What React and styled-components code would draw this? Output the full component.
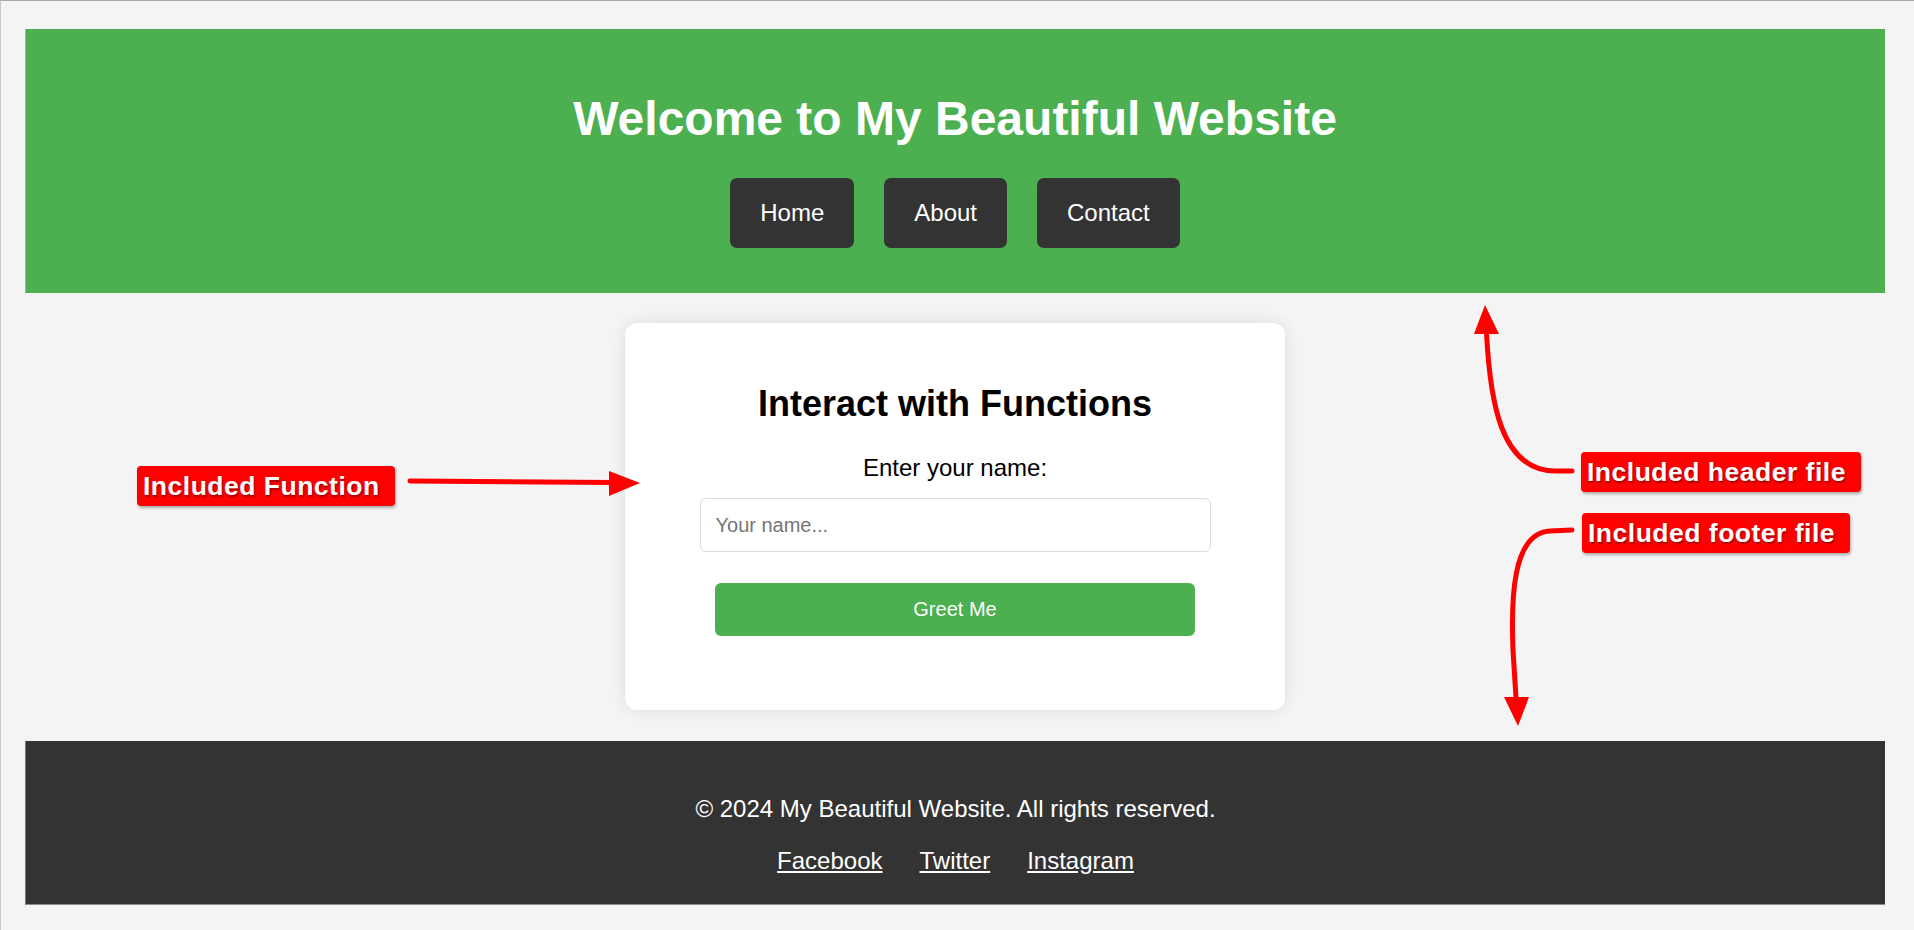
import React from "react";
import styled, { createGlobalStyle } from "styled-components";

const GlobalStyle = createGlobalStyle`
  html, body {
    margin: 0;
    padding: 0;
    background: #f4f4f4;
    font-family: "Liberation Sans", Arial, Helvetica, sans-serif;
  }
  * { box-sizing: border-box; }
`;

const Frame = styled.div`
  position: relative;
  min-height: 930px;
  border-top: 1px solid #a9a9a9;
  border-left: 1px solid #c6c6c6;
  padding: 28px 29px 0 24px;
  background: #f4f4f4;
`;

const Header = styled.header`
  background: #4caf50;
  color: #fff;
  text-align: center;
  padding: 30px;
  box-shadow: inset 1px 0 0 rgba(255, 255, 255, 0.3);
`;

const Title = styled.h1`
  margin: 32px 0;
  font-size: 48px;
  line-height: 55px;
  font-weight: bold;
`;

const Nav = styled.nav`
  display: flex;
  justify-content: center;
  gap: 30px;
  margin-bottom: 15px;
`;

const NavButton = styled.a`
  display: block;
  background: #333;
  color: #fff;
  text-decoration: none;
  font-size: 24px;
  line-height: 28px;
  padding: 21px 30px;
  border-radius: 7px;
`;

const Main = styled.main`
  display: flex;
  justify-content: center;
  padding: 30px 0 31px;
`;

const Card = styled.section`
  width: 660px;
  background: #fff;
  border-radius: 12px;
  box-shadow: 0 0 15px rgba(0, 0, 0, 0.1);
  padding: 30px 30px 74px;
  text-align: center;
`;

const CardTitle = styled.h2`
  margin: 30px 0;
  font-size: 36px;
  line-height: 41px;
  font-weight: bold;
  color: #000;
`;

const Label = styled.label`
  display: block;
  font-size: 24px;
  line-height: 28px;
  color: #000;
  margin-bottom: 16px;
`;

const NameInput = styled.input`
  display: block;
  width: 511px;
  height: 54px;
  margin: 0 auto;
  padding: 0 15px;
  border: 1px solid #dcdcdc;
  border-radius: 6px;
  font-family: "Liberation Sans", Arial, sans-serif;
  font-size: 20px;
  color: #222;
  background: #fff;
  outline: none;
  &::placeholder {
    color: #757575;
  }
`;

const GreetButton = styled.button`
  display: block;
  width: 480px;
  height: 53px;
  margin: 31px auto 0;
  background: #4caf50;
  color: #fff;
  border: none;
  border-radius: 6px;
  font-family: "Liberation Sans", Arial, sans-serif;
  font-size: 20px;
  cursor: pointer;
`;

const Footer = styled.footer`
  background: #333;
  color: #fff;
  text-align: center;
  padding: 30px;
  border-left: 1px solid #7a7a7a;
  border-bottom: 1px solid #8e8e8e;
`;

const FooterText = styled.p`
  margin: 24px 0;
  font-size: 24px;
  line-height: 27.5px;
`;

const LinkRow = styled.div`
  display: flex;
  justify-content: center;
  gap: 37px;
  font-size: 24px;
  line-height: 27.5px;
`;

const FooterLink = styled.a`
  color: #fff;
  text-decoration: underline;
`;

const Callout = styled.div`
  position: absolute;
  left: ${(p) => p.$x}px;
  top: ${(p) => p.$y}px;
  height: 40px;
  padding: 0 15px 0 6px;
  background: #ff0000;
  color: #fff;
  font-weight: bold;
  font-size: 26.5px;
  letter-spacing: 0.5px;
  line-height: 40px;
  white-space: nowrap;
  border-radius: 4px;
  box-shadow: 1px 2px 3px rgba(0, 0, 0, 0.3);
  text-shadow: 1px 2px 2px rgba(90, 0, 0, 0.55);
`;

const ArrowLayer = styled.svg`
  position: absolute;
  left: -1px;
  top: -1px;
  width: 1914px;
  height: 930px;
  pointer-events: none;
  overflow: visible;
`;

function Arrows() {
  const stroke = {
    fill: "none",
    stroke: "#ff0000",
    strokeWidth: 5,
    strokeLinecap: "round",
    strokeLinejoin: "round",
  };
  return (
    <ArrowLayer viewBox="0 0 1914 930">
      <path d="M410 481 L612 482.6" {...stroke} />
      <polygon points="640,483 609,471 609,496" fill="#ff0000" />

      <path d="M1572 471 L1557 471 C1500 472 1490 400 1486.5 333" {...stroke} />
      <polygon points="1485,305 1474,334 1499,334" fill="#ff0000" />

      <path d="M1572 530 L1550 531 C1512 533 1511 600 1513 650 L1516 698" {...stroke} />
      <polygon points="1518,726 1504,697 1529,697" fill="#ff0000" />
    </ArrowLayer>
  );
}

export default function App() {
  return (
    <>
      <GlobalStyle />
      <Frame>
        <Header>
          <Title>Welcome to My Beautiful Website</Title>
          <Nav>
            <NavButton href="#">Home</NavButton>
            <NavButton href="#">About</NavButton>
            <NavButton href="#">Contact</NavButton>
          </Nav>
        </Header>

        <Main>
          <Card>
            <CardTitle>Interact with Functions</CardTitle>
            <Label htmlFor="name">Enter your name:</Label>
            <NameInput id="name" type="text" placeholder="Your name..." />
            <GreetButton type="button">Greet Me</GreetButton>
          </Card>
        </Main>

        <Footer>
          <FooterText>© 2024 My Beautiful Website. All rights reserved.</FooterText>
          <LinkRow>
            <FooterLink href="#">Facebook</FooterLink>
            <FooterLink href="#">Twitter</FooterLink>
            <FooterLink href="#">Instagram</FooterLink>
          </LinkRow>
        </Footer>

        <Arrows />
        <Callout $x={136} $y={465}>Included Function</Callout>
        <Callout $x={1580} $y={451}>Included header file</Callout>
        <Callout $x={1581} $y={512}>Included footer file</Callout>
      </Frame>
    </>
  );
}
